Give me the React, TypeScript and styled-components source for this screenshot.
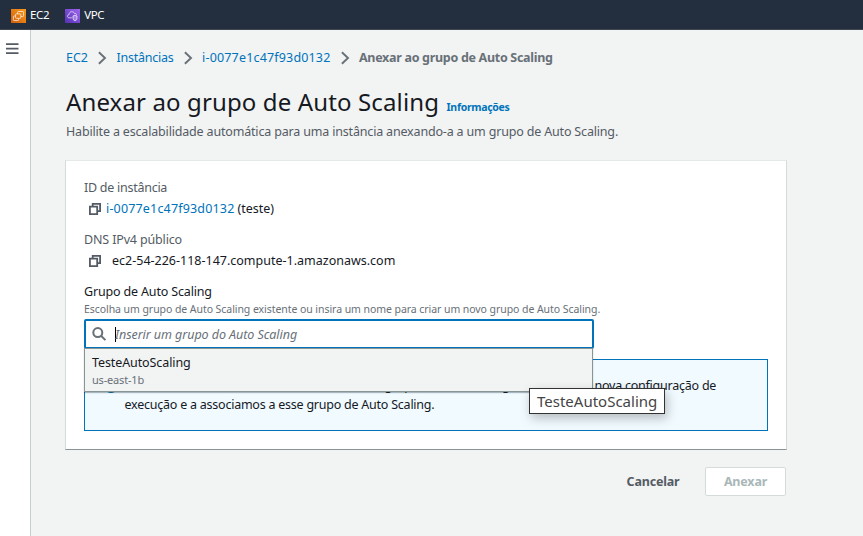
import React from 'react';
import styled, { createGlobalStyle } from 'styled-components';

const GlobalStyle = createGlobalStyle`
  * { box-sizing: border-box; }
  body {
    margin: 0;
    background: #f2f3f3;
    color: #16191f;
    font: 12.5px/20px 'Noto Sans', 'Open Sans', sans-serif;
  }
`;

const Page = styled.div`
  display: flex;
  flex-direction: column;
  height: 100vh;
  overflow: hidden;
  white-space: nowrap;
`;

const TopBar = styled.nav`
  display: flex;
  flex: none;
  align-items: center;
  gap: 16px;
  height: 30px;
  padding: 0 11px;
  background: #232f3e;
  border-bottom: 1px solid #414750;
`;

const Service = styled.a`
  display: flex;
  align-items: center;
  gap: 4px;
  color: #fff;
  font-size: 11.5px;
  line-height: 15px;
  letter-spacing: -0.35px;
  svg { display: block; margin-top: 2px; }
`;

const Body = styled.div`
  display: flex;
  flex: 1;
  min-height: 0;
`;

const SideRail = styled.aside`
  flex: none;
  width: 31px;
  padding: 13px 0 0 6px;
  background: #fff;
  border-right: 1px solid #c9cfcf;
  svg { display: block; }
`;

const Main = styled.main`
  width: 755px;
  padding: 18px 0 0 35px;
`;

const Breadcrumb = styled.ol`
  display: flex;
  align-items: center;
  height: 20px;
  margin: 0;
  padding: 0;
  list-style: none;
  svg { display: block; margin: 0 9.5px 0 10px; }
`;

const Link = styled.a<{ $spacing?: number }>`
  color: #0073bb;
  letter-spacing: ${({ $spacing = 0 }) => $spacing}px;
`;

const Current = styled.span`
  color: #687078;
  font-weight: 700;
  letter-spacing: -0.3px;
`;

const Heading = styled.header`
  display: flex;
  align-items: baseline;
  gap: 7.5px;
  height: 36px;
  margin-top: 16px;
`;

const Title = styled.h1`
  margin: 0;
  font-size: 24px;
  font-weight: 400;
  line-height: 36px;
  letter-spacing: 0.13px;
`;

const InfoLink = styled.a`
  color: #0073bb;
  font-size: 10.5px;
  font-weight: 700;
  letter-spacing: -0.3px;
`;

const Description = styled.p`
  margin: 2px 0 0;
  color: #545b64;
  letter-spacing: -0.173px;
`;

const Card = styled.section`
  height: 290px;
  margin: 18px -1px 0;
  padding: 17px 18px 0;
  background: #fff;
  border: 1px solid #d5dbdb;
  border-top-color: #e5e8e8;
  border-bottom-color: #879596;
`;

const Field = styled.div`
  height: 52px;
`;

const Label = styled.div<{ $spacing: number; $strong?: boolean }>`
  height: 21px;
  color: ${({ $strong }) => ($strong ? '#16191f' : '#545b64')};
  letter-spacing: ${({ $spacing }) => $spacing}px;
`;

const Value = styled.div<{ $gap: number }>`
  display: flex;
  align-items: center;
  height: 20px;
  padding-left: 5px;
  svg { display: block; margin: 0 ${({ $gap }) => $gap}px 0 0; }
`;

const InstanceName = styled.span`
  margin-left: 3px;
`;

const Hint = styled.div`
  height: 14px;
  margin-top: -1px;
  color: #687078;
  font-size: 10.5px;
  line-height: 14px;
  letter-spacing: -0.06px;
`;

const Combo = styled.div`
  position: relative;
  width: 510px;
  height: 30px;
  margin-top: 3px;
`;

const SearchBox = styled.div`
  display: flex;
  align-items: center;
  height: 30px;
  padding-left: 6px;
  border: 2px solid #0073bb;
  border-radius: 2px;
  background: #fff;
`;

const Caret = styled.span`
  width: 1px;
  height: 15px;
  margin-left: 8px;
  background: #000;
`;

const Placeholder = styled.span`
  margin: 1px 0 0 -1px;
  color: #687078;
  font-style: italic;
  letter-spacing: -0.06px;
`;

const Menu = styled.div`
  position: absolute;
  z-index: 2;
  top: 29px;
  left: 0;
  width: 509px;
  height: 44px;
  padding: 4px 7px 0;
  background: #f2f3f3;
  border: 1px solid #879596;
  box-shadow: 0 1px 1px rgba(0, 28, 36, 0.3);
`;

const OptionName = styled.div`
  height: 19px;
  letter-spacing: -0.1px;
`;

const OptionZone = styled.div`
  color: #687078;
  font-size: 11px;
  line-height: 15px;
  letter-spacing: -0.18px;
`;

const Tooltip = styled.div`
  position: absolute;
  z-index: 3;
  top: 69px;
  left: 445px;
  width: 136px;
  height: 26px;
  padding-left: 7px;
  background: #fff;
  border: 1px solid #323232;
  color: #444;
  font-size: 15px;
  line-height: 24px;
  box-shadow: 2px 4px 11px rgba(0, 0, 0, 0.25);
`;

const Alert = styled.div`
  display: flex;
  gap: 6.5px;
  height: 72px;
  margin-top: 10px;
  padding: 16px 0 0 19px;
  background: #f1faff;
  border: 1px solid #0073bb;
  svg { display: block; margin-top: 3px; }
`;

const AlertText = styled.div`
  flex: 1;
  line-height: 19px;
`;

const Line = styled.div`
  display: flex;
  height: 19px;
`;

const Phrase = styled.span<{ $width?: number }>`
  width: ${({ $width }) => ($width ? `${$width}px` : 'auto')};
  overflow: hidden;
  letter-spacing: -0.235px;
`;

const Actions = styled.footer`
  display: flex;
  justify-content: flex-end;
  align-items: center;
  gap: 7px;
  margin-top: 17px;
`;

const Button = styled.button<{ $primary?: boolean }>`
  height: 29px;
  width: ${({ $primary }) => ($primary ? 81 : 90)}px;
  padding: 0;
  border: 1px solid ${({ $primary }) => ($primary ? '#d5dbdb' : 'transparent')};
  border-radius: 2px;
  background: ${({ $primary }) => ($primary ? '#fff' : 'transparent')};
  color: ${({ $primary }) => ($primary ? '#aab7b8' : '#545b64')};
  font: 700 12.5px/20px 'Noto Sans', sans-serif;
  letter-spacing: -0.18px;
`;

const Ec2Icon = () => (
  <svg width="15" height="14" viewBox="0 0 15 14" fill="none">
    <defs>
      <linearGradient id="ec2" x1="0" y1="1" x2="1" y2="0">
        <stop stopColor="#d45f0b" /><stop offset="1" stopColor="#f79b1c" />
      </linearGradient>
    </defs>
    <path fill="url(#ec2)" d="M0 0h15v14H0z" />
    <g stroke="#fff" strokeWidth=".8" opacity=".85">
      <path d="M6.6 5V3.2q0-.7.7-.7h4.5q.7 0 .7.7v3.6q0 .7-.7.7H10" />
      <rect x="4.6" y="4.9" width="5.2" height="4.4" rx=".7" />
      <path d="M4.6 7H3.1q-.7 0-.7.7v3.1q0 .7.7.7h3.8q.7 0 .7-.7V9.3" />
    </g>
  </svg>
);

const VpcIcon = () => (
  <svg width="15" height="14" viewBox="0 0 15 14" fill="none">
    <defs>
      <linearGradient id="vpc" x1="0" y1="1" x2="1" y2="0">
        <stop stopColor="#5430b4" /><stop offset="1" stopColor="#a066f0" />
      </linearGradient>
    </defs>
    <path fill="url(#vpc)" d="M0 0h15v14H0z" />
    <g stroke="#fff" strokeWidth=".8" opacity=".85">
      <path d="M6.8 8.8H4.2C2 8.8 1.8 6 4 5.7 4 2.2 8.6 1.8 9.4 4.4c1.2-.4 2.2.2 2.2 1.4" />
      <path fill="#fff" fillOpacity=".35" d="M8 7l2-.8 2 .8v2.4q0 1.6-2 2.4-2-.8-2-2.4z" />
    </g>
  </svg>
);

const MenuIcon = () => (
  <svg width="13" height="12" viewBox="0 0 13 12" fill="#545b64">
    <path d="M0 .2h12.5V2H0zM0 4.7h12.5v1.8H0zM0 9.2h12.5V11H0z" />
  </svg>
);

const Chevron = () => (
  <svg width="9" height="14" viewBox="0 0 9 14" fill="none" stroke="#687078" strokeWidth="1.9">
    <path d="M.9 1.2 7 7 .9 12.8" />
  </svg>
);

const CopyIcon = () => (
  <svg width="12" height="12" viewBox="0 0 12 12" fill="none" stroke="#545b64" strokeWidth="1.8">
    <path d="M.9 3.6h7.3v7.5H.9z" />
    <path d="M3.7 3.6V.9h7.4v7.3H8.2" />
  </svg>
);

const SearchIcon = () => (
  <svg width="15" height="14" viewBox="0 0 15 14" fill="none" stroke="#687078" strokeWidth="2">
    <circle cx="5.8" cy="5.6" r="4.5" />
    <path d="m9 8.8 4.4 4.3" />
  </svg>
);

const InfoIcon = () => (
  <svg width="14" height="14" viewBox="0 0 14 14" fill="none" stroke="#0073bb" strokeWidth="1.8">
    <circle cx="7" cy="7" r="6" />
    <path d="M7 3v2M7 6v5" />
  </svg>
);

export default function App() {
  return (
    <Page>
      <GlobalStyle />
      <TopBar>
        <Service><Ec2Icon />EC2</Service>
        <Service><VpcIcon />VPC</Service>
      </TopBar>
      <Body>
        <SideRail><MenuIcon /></SideRail>
        <Main>
          <Breadcrumb>
            <Link>EC2</Link>
            <Chevron />
            <Link $spacing={-0.24}>Instâncias</Link>
            <Chevron />
            <Link $spacing={0.17}>i-0077e1c47f93d0132</Link>
            <Chevron />
            <Current>Anexar ao grupo de Auto Scaling</Current>
          </Breadcrumb>
          <Heading>
            <Title>Anexar ao grupo de Auto Scaling</Title>
            <InfoLink>Informações</InfoLink>
          </Heading>
          <Description>
            Habilite a escalabilidade automática para uma instância anexando-a a um grupo de Auto Scaling.
          </Description>
          <Card>
            <Field>
              <Label $spacing={-0.26}>ID de instância</Label>
              <Value $gap={5}>
                <CopyIcon />
                <Link $spacing={0.17}>i-0077e1c47f93d0132</Link>
                <InstanceName>(teste)</InstanceName>
              </Value>
            </Field>
            <Field>
              <Label $spacing={-0.15}>DNS IPv4 público</Label>
              <Value $gap={11}>
                <CopyIcon />
                <span>ec2-54-226-118-147.compute-1.amazonaws.com</span>
              </Value>
            </Field>
            <Label $strong $spacing={-0.16}>Grupo de Auto Scaling</Label>
            <Hint>
              Escolha um grupo de Auto Scaling existente ou insira um nome para criar um novo grupo de Auto Scaling.
            </Hint>
            <Combo>
              <SearchBox>
                <SearchIcon />
                <Caret />
                <Placeholder>Inserir um grupo do Auto Scaling</Placeholder>
              </SearchBox>
              <Menu>
                <OptionName>TesteAutoScaling</OptionName>
                <OptionZone>us-east-1b</OptionZone>
              </Menu>
              <Tooltip>TesteAutoScaling</Tooltip>
            </Combo>
            <Alert>
              <InfoIcon />
              <AlertText>
                <Line>
                  <Phrase $width={260}>Se você inserir um nome novo, criaremos um</Phrase>
                  <Phrase $width={210}>grupo de Auto Scaling com uma</Phrase>
                  <Phrase>nova configuração de</Phrase>
                </Line>
                <Phrase>execução e a associamos a esse grupo de Auto Scaling.</Phrase>
              </AlertText>
            </Alert>
          </Card>
          <Actions>
            <Button>Cancelar</Button>
            <Button $primary disabled>Anexar</Button>
          </Actions>
        </Main>
      </Body>
    </Page>
  );
}
